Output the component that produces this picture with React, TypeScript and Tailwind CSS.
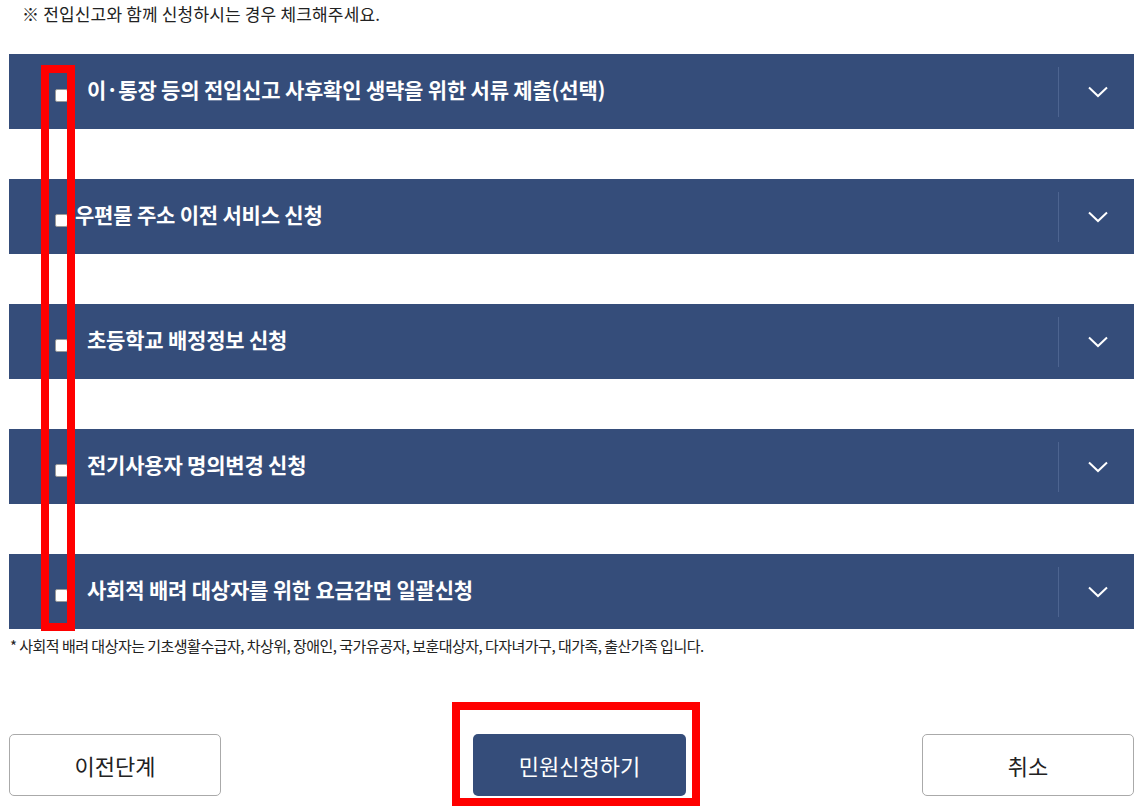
import React from 'react';

const items = [
  { title: '이·통장 등의 전입신고 사후확인 생략을 위한 서류 제출(선택)', gap: 'ml-[19px]' },
  { title: '우편물 주소 이전 서비스 신청', gap: 'ml-[7px]' },
  { title: '초등학교 배정정보 신청', gap: 'ml-[19px]' },
  { title: '전기사용자 명의변경 신청', gap: 'ml-[19px]' },
  { title: '사회적 배려 대상자를 위한 요금감면 일괄신청', gap: 'ml-[19px]' },
];

function Chevron() {
  return (
    <svg width="20" height="12" viewBox="0 0 20 12" fill="none">
      <polyline points="1,1.5 10,10 19,1.5" stroke="#fff" strokeWidth="2" />
    </svg>
  );
}

function Row({ title, gap }: { title: string; gap: string }) {
  return (
    <div className="flex h-[75px] items-center bg-[#354d7a]">
      <span className="ml-[46px] mt-[8px] h-[13px] w-[13px] shrink-0 rounded-[2px] border border-[#9a9a9a] bg-white" />
      <span className={`${gap} -mt-[3px] flex-1 text-[21px] font-bold tracking-[-0.01em] text-white`}>
        {title}
      </span>
      <span className="h-[50px] w-px bg-[#4d6490]" />
      <span className="ml-[29px] mr-[26px] flex items-center">
        <Chevron />
      </span>
    </div>
  );
}

export default function App() {
  return (
    <div
      className="relative h-[810px] w-[1145px] overflow-hidden bg-white"
      style={{ fontFamily: '"Noto Sans CJK KR", "Noto Sans", sans-serif' }}
    >
      <div className="ml-[9px] w-[1125px]">
        <p className="ml-[13px] pt-[2px] text-[17px] leading-6 tracking-[0.01em] text-[#222]">
          ※ 전입신고와 함께 신청하시는 경우 체크해주세요.
        </p>

        <div className="mt-[28px] flex flex-col gap-[50px]">
          {items.map((it) => (
            <Row key={it.title} title={it.title} gap={it.gap} />
          ))}
        </div>

        <p className="mt-[7px] ml-px text-[15px] leading-5 tracking-[-0.035em] text-[#222]">
          * 사회적 배려 대상자는 기초생활수급자, 차상위, 장애인, 국가유공자, 보훈대상자, 다자녀가구, 대가족, 출산가족 입니다.
        </p>

        <div className="mt-[78px] flex">
          <button className="h-[62px] w-[212px] rounded-[5px] border border-[#aaa] bg-white text-[22px] text-[#222]">
            이전단계
          </button>
          <button className="ml-[252px] h-[62px] w-[213px] rounded-[5px] bg-[#354d7a] text-[22px] text-white">
            민원신청하기
          </button>
          <button className="ml-[236px] h-[62px] w-[212px] rounded-[5px] border border-[#aaa] bg-white text-[22px] text-[#222]">
            취소
          </button>
        </div>
      </div>

      <div className="pointer-events-none absolute left-[41px] top-[65px] h-[566px] w-[34px] border-[8px] border-[#ff0000]" />
      <div className="pointer-events-none absolute left-[452px] top-[702px] h-[104px] w-[248px] border-[8px] border-[#ff0000]" />
    </div>
  );
}
